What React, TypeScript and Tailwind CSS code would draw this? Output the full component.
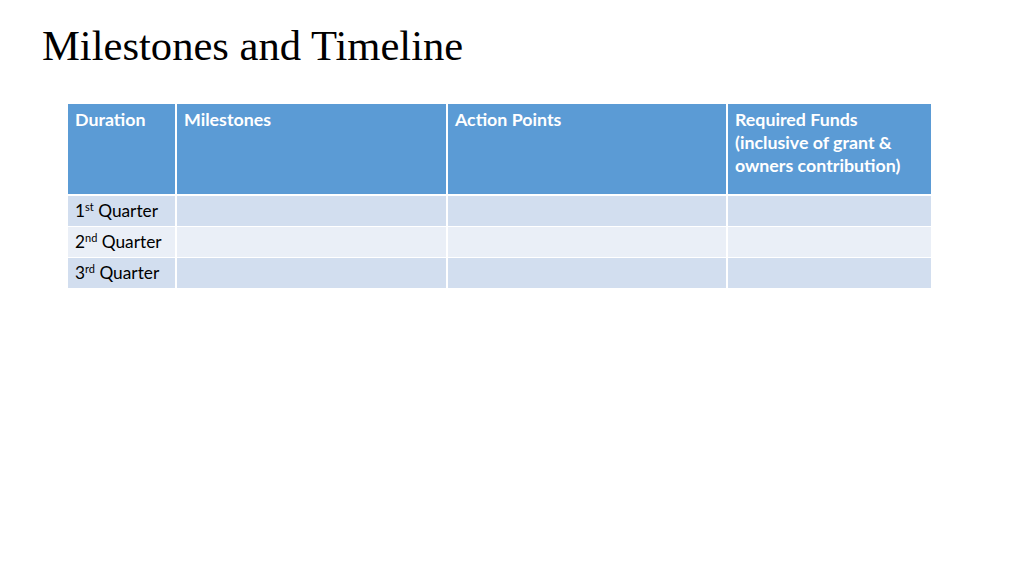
export default function App() {
  const rows = [
    { n: "1", sup: "st", bg: "bg-[#d2deef]" },
    { n: "2", sup: "nd", bg: "bg-[#eaeff7]" },
    { n: "3", sup: "rd", bg: "bg-[#d2deef]" },
  ];

  return (
    <div className="h-[576px] w-[1024px] bg-white">
      <h1 className="pl-[42px] pt-[21px] font-['Liberation_Serif',serif] text-[42.6px] leading-[50px] text-black">
        Milestones and Timeline
      </h1>
      <div className="pl-[68px] pt-[33px]">
        <table className="border-collapse font-['Lato',sans-serif] text-[17.3px] text-black">
          <thead>
            <tr className="h-[91px] bg-[#5b9bd5] align-top text-white">
              <th className="w-[108px] border-r-2 border-b-[2px] border-white px-[7px] pt-[4px] text-left text-[17.8px] font-bold leading-[23px]">
                Duration
              </th>
              <th className="w-[271px] border-r-2 border-b-[2px] border-white px-[7px] pt-[4px] text-left text-[17.8px] font-bold leading-[23px]">
                Milestones
              </th>
              <th className="w-[280px] border-r-2 border-b-[2px] border-white px-[7px] pt-[4px] text-left text-[17.8px] font-bold leading-[23px]">
                Action Points
              </th>
              <th className="w-[204px] border-b-[2px] border-white px-[7px] pt-[4px] text-left text-[17.8px] font-bold leading-[23px]">
                Required Funds
                <br />
                (inclusive of grant &amp;
                <br />
                owners contribution)
              </th>
            </tr>
          </thead>
          <tbody>
            {rows.map((r, i) => (
              <tr key={r.n} className={`h-[31px] ${r.bg} ${i < 2 ? "border-b border-white" : ""}`}>
                <td className="border-r-2 border-white px-[7px] leading-[20px]">
                  {r.n}
                  <sup className="text-[11px]">{r.sup}</sup> Quarter
                </td>
                <td className="border-r-2 border-white" />
                <td className="border-r-2 border-white" />
                <td />
              </tr>
            ))}
          </tbody>
        </table>
      </div>
    </div>
  );
}
